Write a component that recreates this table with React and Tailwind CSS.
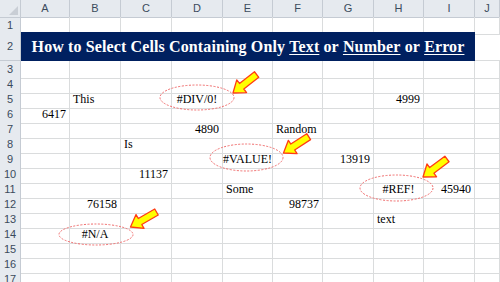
const cols = ["A", "B", "C", "D", "E", "F", "G", "H", "I", "J"];

const cells = {
  5: { B: ["This", "l"], D: ["#DIV/0!", "c"], H: ["4999", "r"] },
  6: { A: ["6417", "r"] },
  7: { D: ["4890", "r"], F: ["Random", "l"] },
  8: { C: ["Is", "l"] },
  9: { E: ["#VALUE!", "c"], G: ["13919", "r"] },
  10: { C: ["11137", "r"] },
  11: { E: ["Some", "l"], H: ["#REF!", "c"], I: ["45940", "r"] },
  12: { B: ["76158", "r"], F: ["98737", "r"] },
  13: { H: ["text", "l"] },
  14: { B: ["#N/A", "c"] },
};

const align = { l: "justify-start pl-[3px]", r: "justify-end pr-[3px]", c: "justify-center" };

const gridCols =
  "grid grid-cols-[21px_49px_51px_51px_51px_50px_50px_51px_50px_51px_1fr]";

const RowHeader = ({ n }) => (
  <div className="flex items-center justify-center border-r border-b border-[#c5cbd3] bg-[#e6eaef] text-[11px] text-[#3b4a5c] font-['Liberation_Sans',sans-serif]">
    {n}
  </div>
);

const Arrow = ({ x, y, angle }) => (
  <polygon
    transform={`translate(${x} ${y}) rotate(${angle})`}
    points="0,0 11,-8 11,-3.5 30,-3.5 30,3.5 11,3.5 11,8"
    fill="#ffff00"
    stroke="#ff3c14"
    strokeWidth="1.3"
    strokeLinejoin="round"
  />
);

const Oval = ({ cx, cy, rx, ry }) => (
  <ellipse
    cx={cx}
    cy={cy}
    rx={rx}
    ry={ry}
    fill="none"
    stroke="#f06b6b"
    strokeWidth="1"
    strokeDasharray="2 1.5"
  />
);

export default function App() {
  const rows = Array.from({ length: 17 }, (_, i) => i + 1);

  return (
    <div className="relative w-[500px] h-[282px] overflow-hidden bg-white font-['Liberation_Serif',serif] text-[12px] text-black">
      {/* column headers */}
      <div className={`${gridCols} h-[17px]`}>
        <div className="relative border-r border-b border-[#c5cbd3] bg-[#e6eaef]">
          <div className="absolute right-[2px] bottom-[2px] w-0 h-0 border-l-[9px] border-l-transparent border-b-[9px] border-b-[#c9ced5]" />
        </div>
        {cols.map((c) => (
          <div
            key={c}
            className="flex items-center justify-center border-r border-b border-[#c5cbd3] bg-[#e6eaef] text-[11px] text-[#3b4a5c] font-['Liberation_Sans',sans-serif]"
          >
            {c}
          </div>
        ))}
      </div>

      {rows.map((r) =>
        r === 2 ? (
          <div key={r} className={`${gridCols} h-[29px]`}>
            <RowHeader n={r} />
            <div className="col-span-9 flex items-center justify-center bg-[#002060] text-white font-bold text-[16px] tracking-[0.12px] whitespace-nowrap">
              How to Select Cells Containing Only&nbsp;
              <span className="underline underline-offset-2">Text</span>
              &nbsp;or&nbsp;
              <span className="underline underline-offset-2">Number</span>
              &nbsp;or&nbsp;
              <span className="underline underline-offset-2">Error</span>
            </div>
            <div className="border-b border-[#dadcdd]" />
          </div>
        ) : (
          <div key={r} className={`${gridCols} h-[15px]`}>
            <RowHeader n={r} />
            {cols.map((c) => {
              const v = cells[r] && cells[r][c];
              return (
                <div
                  key={c}
                  className={`flex items-center whitespace-nowrap leading-[14px] border-r border-b border-[#dadcdd] ${
                    v ? align[v[1]] : ""
                  }`}
                >
                  {v ? v[0] : null}
                </div>
              );
            })}
          </div>
        )
      )}

      {/* annotations */}
      <svg className="absolute left-0 top-0 pointer-events-none" width="500" height="282">
        <Oval cx={197} cy={97.5} rx={37} ry={12.5} />
        <Oval cx={246.5} cy={157.5} rx={36.5} ry={13.5} />
        <Oval cx={396.5} cy={188} rx={36.5} ry={13} />
        <Oval cx={96} cy={234.5} rx={37} ry={10.5} />
        <Arrow x={233} y={93} angle={-38} />
        <Arrow x={283.5} y={153} angle={-33} />
        <Arrow x={423} y={177} angle={-37} />
        <Arrow x={130.5} y={227} angle={-30} />
      </svg>
    </div>
  );
}
